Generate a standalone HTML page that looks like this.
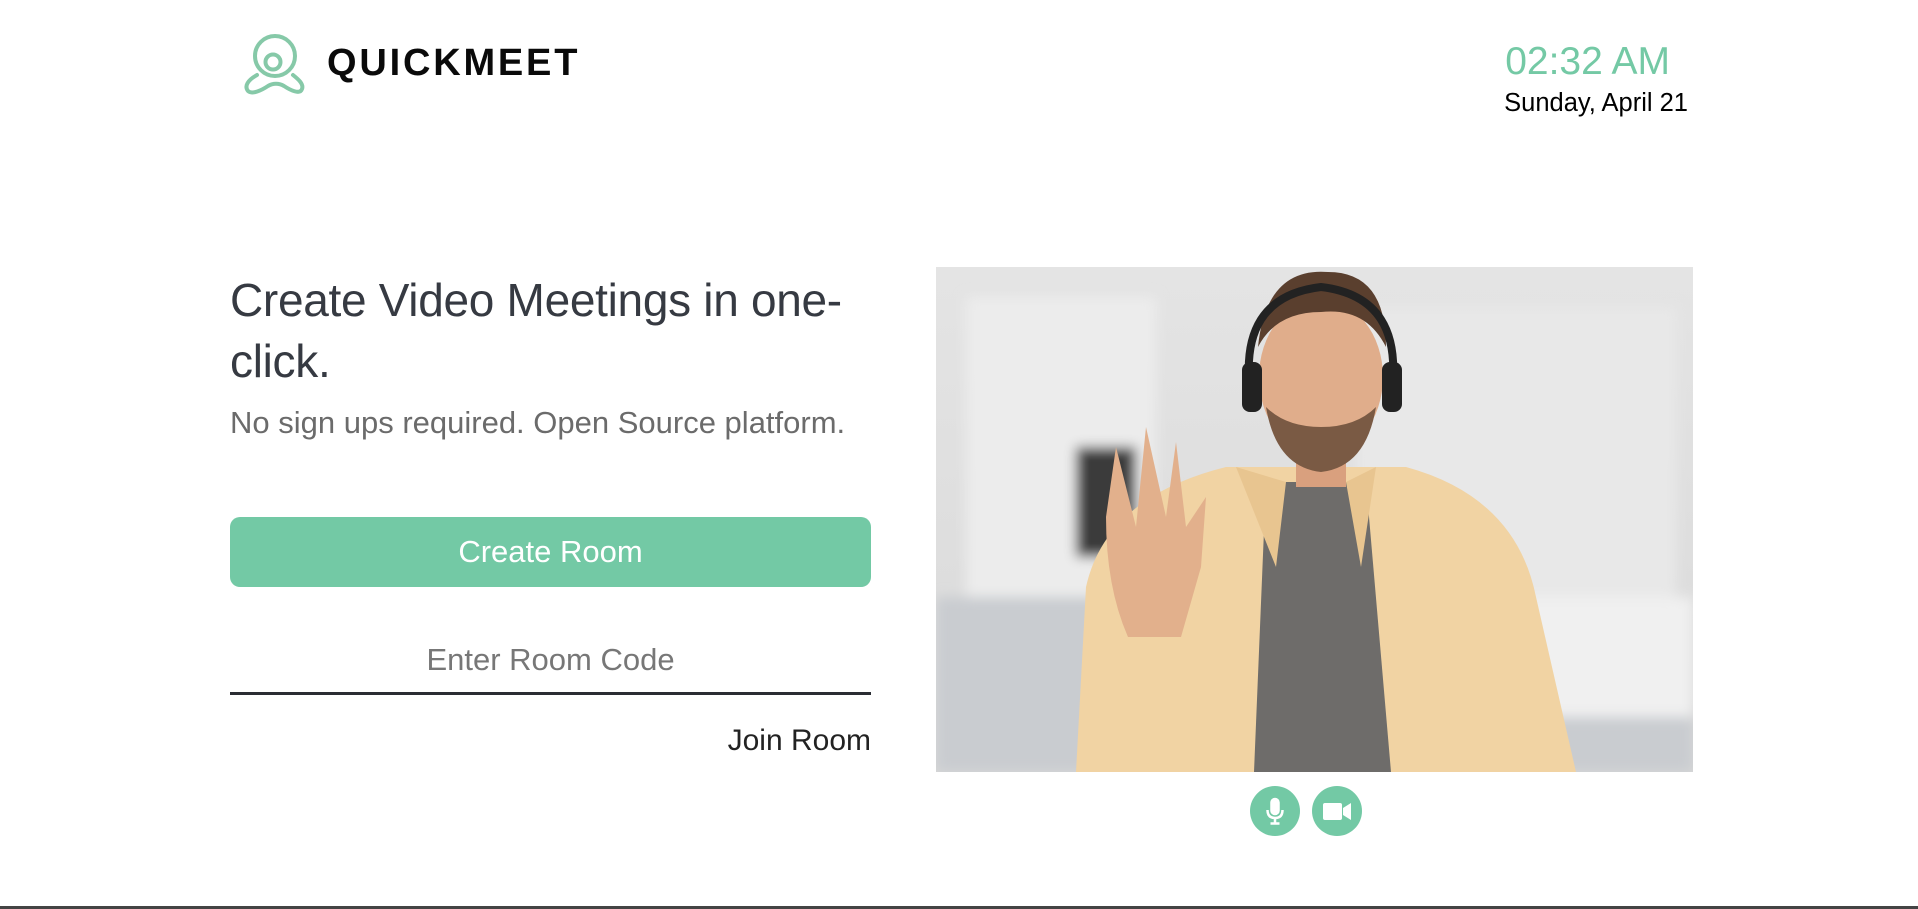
<!DOCTYPE html>
<html><head><meta charset="utf-8"><style>
*{margin:0;padding:0;box-sizing:border-box}
body{width:1918px;height:909px;background:#fff;position:relative;overflow:hidden;font-family:"Liberation Sans",sans-serif}
.abs{position:absolute;white-space:nowrap}
</style></head><body>
<svg class="abs" style="left:240px;top:28px" width="70" height="72" viewBox="240 28 70 72" fill="none" stroke="#86c9a8" stroke-width="4" stroke-linecap="round">
<circle cx="275" cy="56" r="20"/>
<circle cx="273" cy="62" r="7.5"/>
<path d="M257 75 C248 80 244 86 248 91 C252 95 262 90 268 86 C273 83 279 83 284 86 C290 90 300 95 302 89 C304 84 298 79 293 75"/>
</svg>
<div class="abs" style="left:327px;top:42px;font-size:38px;font-weight:bold;letter-spacing:2.8px;color:#0a0a0a">QUICKMEET</div>
<div class="abs" style="right:248px;top:40px;font-size:39px;color:#74c9a5">02:32 AM</div>
<div class="abs" style="right:230px;top:89px;font-size:25.5px;color:#000">Sunday, April 21</div>

<div class="abs" style="left:230px;top:270px;font-size:46px;line-height:61px;color:#363a42;letter-spacing:-0.3px">Create Video Meetings in one-<br>click.</div>
<div class="abs" style="left:230px;top:405px;font-size:31px;color:#6b6b6b">No sign ups required. Open Source platform.</div>
<div class="abs" style="left:230px;top:517px;width:641px;height:70px;background:#73c9a5;border-radius:10px;color:#fff;font-size:31px;text-align:center;line-height:70px">Create Room</div>
<div class="abs" style="left:230px;top:642px;width:641px;text-align:center;font-size:31px;color:#777">Enter Room Code</div>
<div class="abs" style="left:230px;top:692px;width:641px;height:3px;background:#2a2d33"></div>
<div class="abs" style="right:1047px;top:724px;font-size:30px;color:#222">Join Room</div>

<div class="abs" style="left:936px;top:267px;width:757px;height:505px;overflow:hidden;background:linear-gradient(180deg,#e4e4e4 0%,#dedede 55%,#d8d8d8 100%)">
<svg width="757" height="505" viewBox="0 0 757 505">
<defs><filter id="b"><feGaussianBlur stdDeviation="6"/></filter></defs>
<g filter="url(#b)">
<rect x="30" y="30" width="190" height="310" fill="#ececec"/>
<rect x="140" y="180" width="60" height="110" fill="#3a3a3a"/>
<rect x="420" y="40" width="320" height="300" fill="#e8e8e8"/>
<rect x="0" y="330" width="757" height="175" fill="#c9ccd0"/>
<rect x="560" y="330" width="197" height="120" fill="#f0f0f0"/>
</g>
<path d="M140 505 L150 320 Q170 230 290 200 L470 200 Q580 230 600 330 L640 505 Z" fill="#f1d3a3"/>
<path d="M330 215 L430 215 L455 505 L318 505 Z" fill="#6e6c6a"/>
<path d="M300 200 L350 215 L340 300 Z M440 200 L410 215 L425 300 Z" fill="#e8c590"/>
<rect x="360" y="150" width="50" height="70" fill="#d9a07e"/>
<ellipse cx="385" cy="110" rx="62" ry="78" fill="#e0ad8b"/>
<path d="M330 140 Q340 200 385 205 Q430 200 440 140 Q420 160 385 160 Q350 160 330 140Z" fill="#7a5a44"/>
<path d="M322 80 Q330 0 392 5 Q450 5 450 80 Q430 40 385 45 Q340 45 322 80Z" fill="#5a3f2e"/>
<path d="M315 130 Q300 30 385 20 Q470 30 455 130" fill="none" stroke="#222" stroke-width="8"/>
<rect x="306" y="95" width="20" height="50" rx="8" fill="#222"/>
<rect x="446" y="95" width="20" height="50" rx="8" fill="#222"/>
<path d="M192 370 Q170 320 170 250 L180 180 L200 260 L210 160 L230 250 L240 175 L250 260 L270 230 L265 300 L245 370 Z" fill="#e2b08c"/>
</svg>
</div>
<div class="abs" style="left:1250px;top:786px;width:50px;height:50px;border-radius:50%;background:#73c9a5">
<svg width="50" height="50" viewBox="0 0 50 50" fill="none" stroke="#fff" stroke-width="2.5"><rect x="21.5" y="13" width="7" height="15" rx="3.5" fill="#fff"/><path d="M17.5 24 Q17.5 32 25 32 Q32.5 32 32.5 24 M25 32 V37 M20.5 37.5 H29.5"/></svg></div>
<div class="abs" style="left:1312px;top:786px;width:50px;height:50px;border-radius:50%;background:#73c9a5">
<svg width="50" height="50" viewBox="0 0 50 50"><rect x="11" y="17" width="19" height="17" rx="2" fill="#fff"/><path d="M31 22 L39 17 V34 L31 29 Z" fill="#fff"/></svg></div>
<div class="abs" style="left:0;top:906px;width:1918px;height:3px;background:#444"></div>
</body></html>
